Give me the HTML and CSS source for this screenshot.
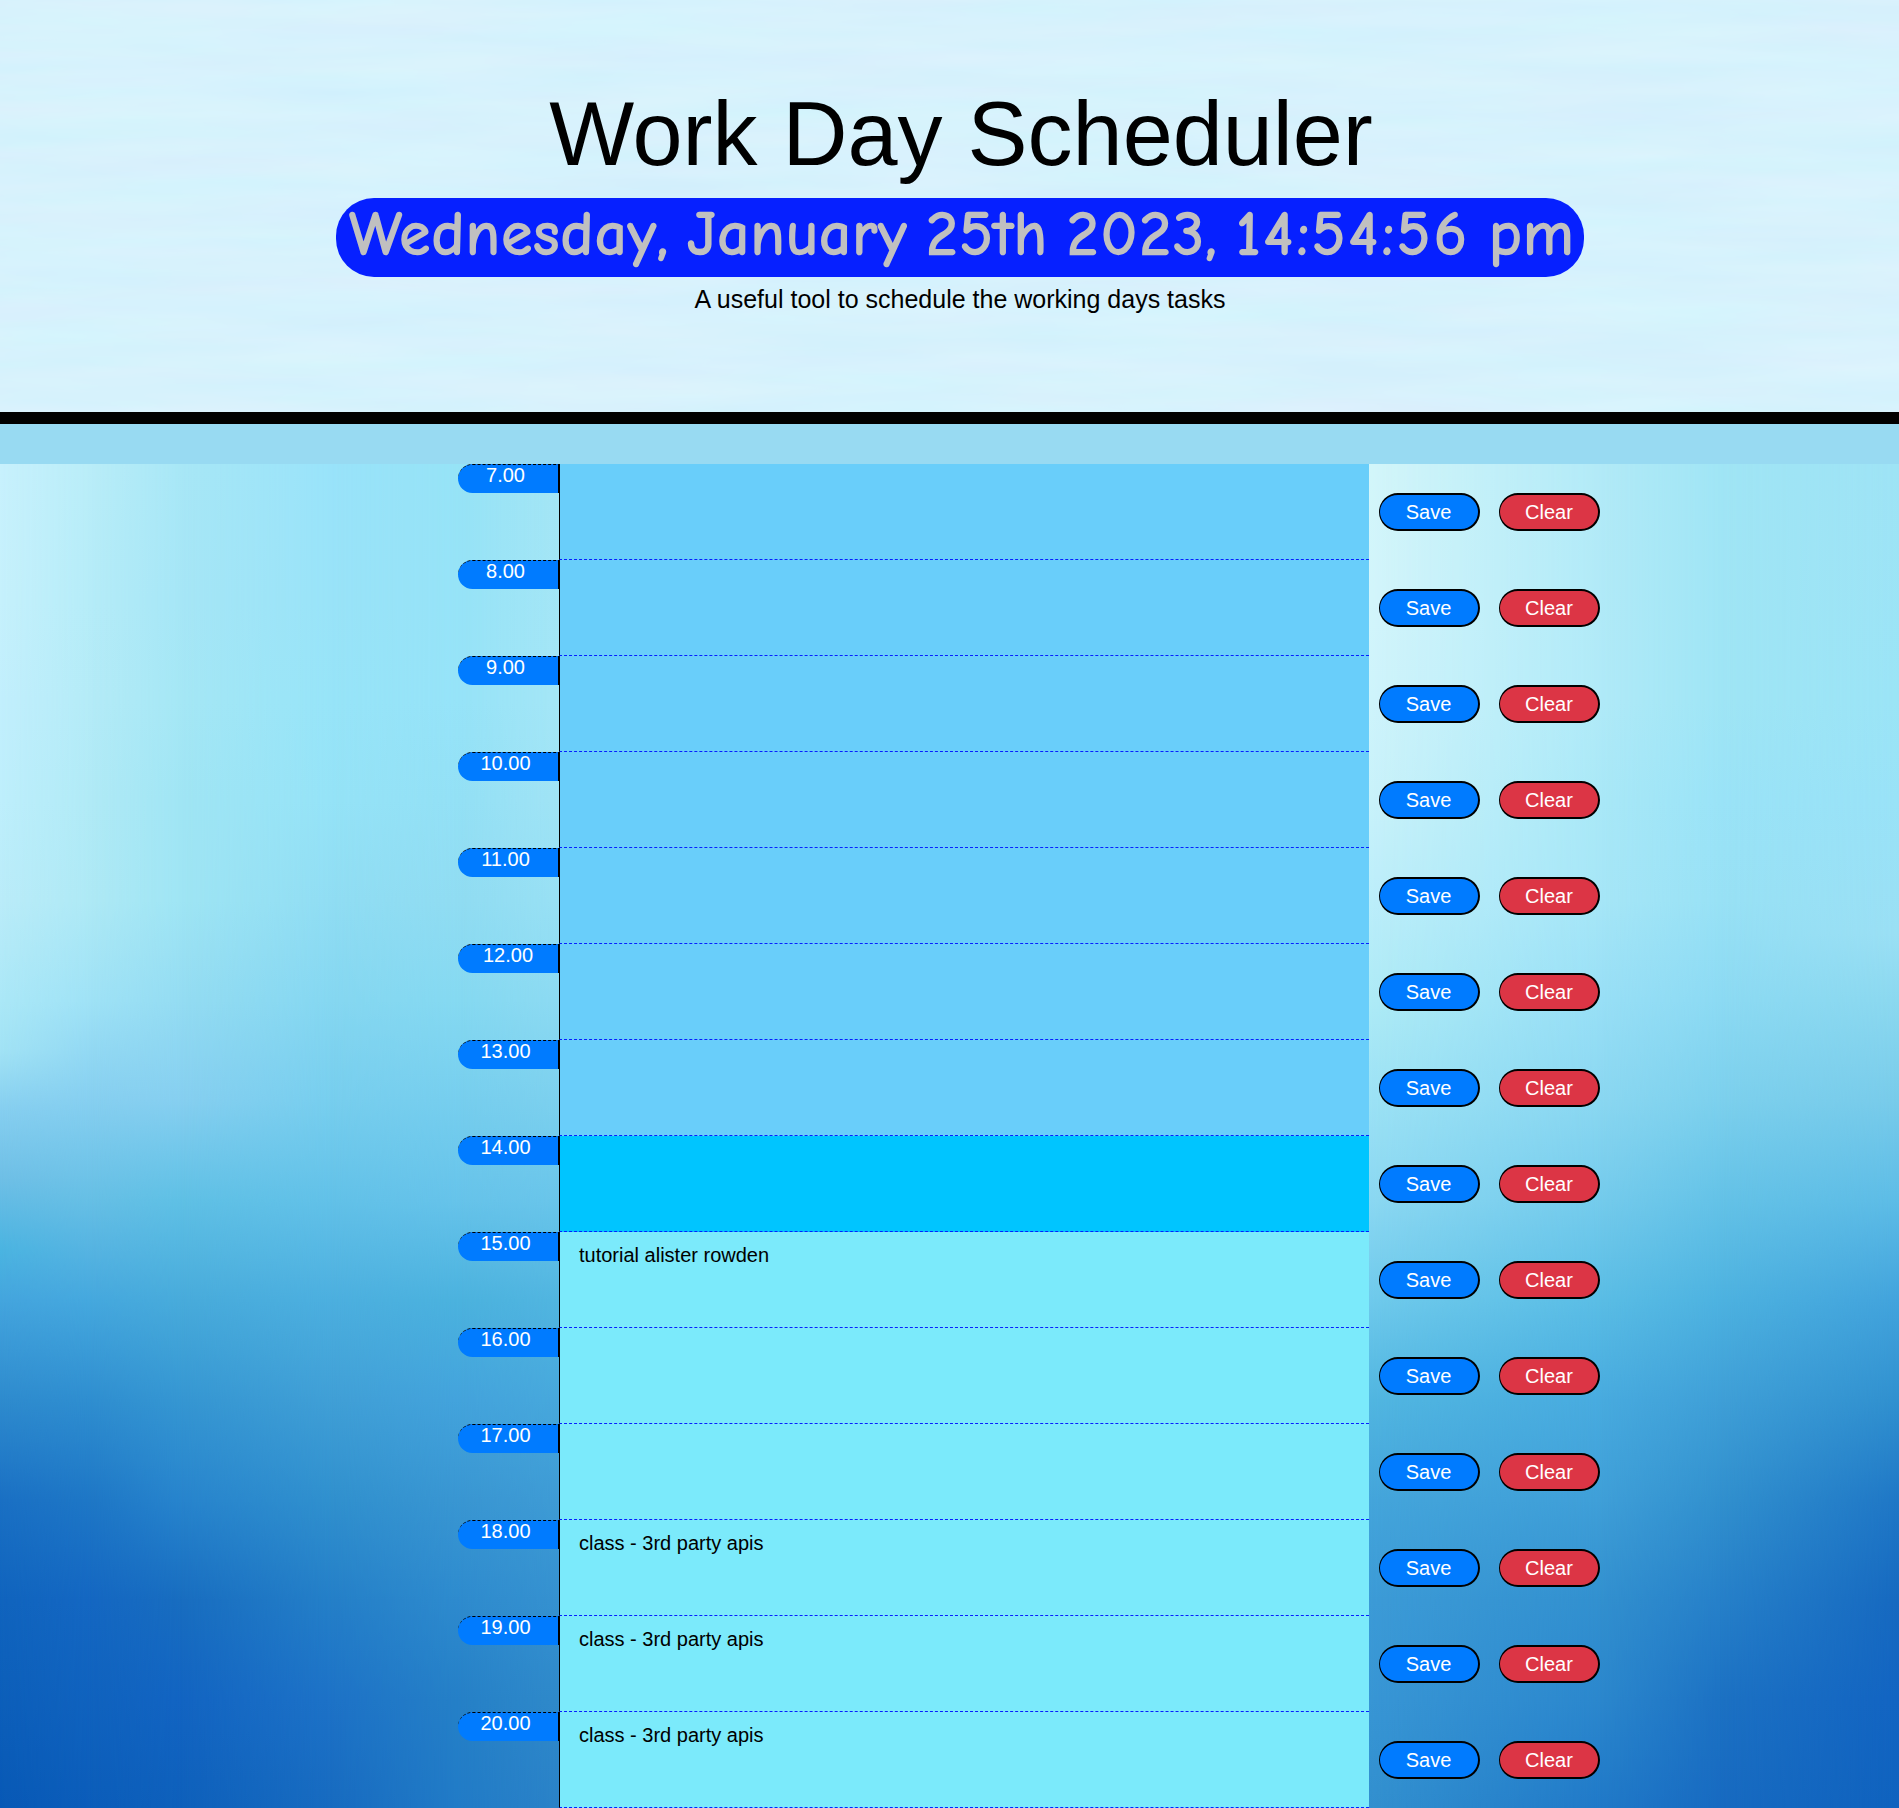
FILE: index.html
```html
<!DOCTYPE html>
<html lang="en">
<head>
<meta charset="utf-8">
<title>Work Day Scheduler</title>
<link rel="stylesheet" href="styles.css">
</head>
<body>
<header class="jumbotron">
  <svg class="ripples" width="100%" height="100%" aria-hidden="true">
    <filter id="ripple" x="0" y="0" width="100%" height="100%" color-interpolation-filters="sRGB">
      <feTurbulence type="fractalNoise" baseFrequency="0.004 0.04" numOctaves="3" seed="8"/>
      <feColorMatrix values="0.055 0 0 0 0.815  0 0.03 0 0 0.934  0 0 0.01 0 0.985  0 0 0 0 1"/>
    </filter>
    <rect width="100%" height="100%" filter="url(#ripple)"/>
  </svg>
  <h1 class="title">Work Day Scheduler</h1>
  <p class="today">Wednesday, January 25th 2023, <span class="clock">14:54:56</span> pm</p>
  <p class="lead">A useful tool to schedule the working days tasks</p>
</header>
<div class="band"></div>
<main class="planner">
  <div class="water" aria-hidden="true">
    <i class="c0"></i><i class="c1"></i><i class="c2"></i><i class="c3"></i><i class="c4"></i><i class="c5"></i><i class="c6"></i><i class="c7"></i><i class="c8"></i><i class="c9"></i>
  </div>
  <div class="container">
    <div class="row"><div class="hour">7.00</div><div class="task past"></div><button class="btn save">Save</button><button class="btn clear">Clear</button></div>
    <div class="row"><div class="hour">8.00</div><div class="task past"></div><button class="btn save">Save</button><button class="btn clear">Clear</button></div>
    <div class="row"><div class="hour">9.00</div><div class="task past"></div><button class="btn save">Save</button><button class="btn clear">Clear</button></div>
    <div class="row"><div class="hour">10.00</div><div class="task past"></div><button class="btn save">Save</button><button class="btn clear">Clear</button></div>
    <div class="row"><div class="hour">11.00</div><div class="task past"></div><button class="btn save">Save</button><button class="btn clear">Clear</button></div>
    <div class="row"><div class="hour noon">12.00</div><div class="task past"></div><button class="btn save">Save</button><button class="btn clear">Clear</button></div>
    <div class="row"><div class="hour">13.00</div><div class="task past"></div><button class="btn save">Save</button><button class="btn clear">Clear</button></div>
    <div class="row"><div class="hour">14.00</div><div class="task present"></div><button class="btn save">Save</button><button class="btn clear">Clear</button></div>
    <div class="row"><div class="hour">15.00</div><div class="task future">tutorial alister rowden</div><button class="btn save">Save</button><button class="btn clear">Clear</button></div>
    <div class="row"><div class="hour">16.00</div><div class="task future"></div><button class="btn save">Save</button><button class="btn clear">Clear</button></div>
    <div class="row"><div class="hour">17.00</div><div class="task future"></div><button class="btn save">Save</button><button class="btn clear">Clear</button></div>
    <div class="row"><div class="hour">18.00</div><div class="task future">class - 3rd party apis</div><button class="btn save">Save</button><button class="btn clear">Clear</button></div>
    <div class="row"><div class="hour">19.00</div><div class="task future">class - 3rd party apis</div><button class="btn save">Save</button><button class="btn clear">Clear</button></div>
    <div class="row"><div class="hour">20.00</div><div class="task future">class - 3rd party apis</div><button class="btn save">Save</button><button class="btn clear">Clear</button></div>
  </div>
</main>
</body>
</html>
```
FILE: styles.css
```css
* { box-sizing: border-box; }
body {
  margin: 0;
  font-family: "Liberation Sans", Arial, sans-serif;
  font-size: 20px;
  line-height: 30px;
  color: #000;
  background: #98daf2;
}
.jumbotron {
  position: relative;
  display: flex;
  flex-direction: column;
  align-items: center;
  height: 424px;
  padding: 80px 0 0 21px;
  border-bottom: 12px solid #000;
  background: #d7f2fd;
  overflow: hidden;
}
.ripples { position: absolute; inset: 0; }
.title, .today, .lead { position: relative; margin: 0; white-space: nowrap; }
.title { padding-left: 2px; font-size: 90px; font-weight: 400; line-height: 108px; }
.today {
  width: 1248px;
  height: 79px;
  margin-top: 10px;
  padding-left: 5px;
  border-radius: 38px;
  background: #0620ff;
  color: silver;
  font-family: "Comic Sans MS", "Comic Neue", Lato, sans-serif;
  font-size: 60px;
  line-height: 74px;
  letter-spacing: 2.3px;
  word-spacing: -4px;
  text-align: center;
  -webkit-text-stroke: 2.5px silver;
}
.clock { letter-spacing: 4.2px; }
.lead { margin-top: 4px; font-size: 25px; line-height: 36px; }
.band { height: 40px; background: #98daf2; }

.planner { position: relative; height: 1344px; overflow: hidden; }
.container { position: relative; padding-left: 458px; }
.row { display: flex; height: 96px; }
.hour {
  width: 101px;
  height: 29px;
  padding-right: 5px;
  border-top: 1px dashed #000;
  border-right: 1px solid #000;
  border-radius: 15px 0 0 15px;
  background: #007bff;
  color: #fff;
  line-height: 20px;
  text-align: center;
}
.noon { padding-right: 0; }
.task {
  width: 810px;
  padding: 8px 19px;
  border-left: 1px solid #000;
  border-bottom: 1px dashed #0620ff;
}
.past { background: #69cefa; }
.present { background: #00c5ff; }
.future { background: #7beafb; }
.btn {
  width: 101px;
  height: 38px;
  margin: 29px 9px 0 10px;
  padding: 0;
  border: 2px solid #000;
  border-left-width: 1px;
  border-radius: 19px;
  color: #fff;
  font: 20px/30px "Liberation Sans", Arial, sans-serif;
}
.save { padding-right: 1px; background: #007bff; }
.clear { background: #dc3545; }

/* Sea backdrop: vertical gradients cross-faded from left to right */
.water, .water i { position: absolute; inset: 0; }
.water i {
  -webkit-mask-image: linear-gradient(to right, transparent var(--from), #000 var(--to));
  mask-image: linear-gradient(to right, transparent var(--from), #000 var(--to));
}
.water .c0 { -webkit-mask: none; mask: none; background: linear-gradient(#c8f1fd 0, #c6f1fc 136px, #c2effd 236px, #beeffc 336px, #baecf9 436px, #abe8f7 536px, #a2e3f5 586px, #86cff0 645px, #6ebfe6 716px, #4bb4e1 786px, #44a5de 836px, #2e8bce 936px, #1a70c4 1036px, #1064be 1136px, #0859b6 1344px); }
.water .c1 { --from: 0px; --to: 90px; background: linear-gradient(#b9edf8 0, #b5ecf8 136px, #b4ebf7 236px, #b0eaf6 336px, #aee9f5 436px, #9fe2f6 536px, #86cff0 636px, #66bfe5 736px, #45a8de 836px, #2f8ed0 936px, #1e77c6 1036px, #1467c2 1136px, #0b5dba 1344px); }
.water .c2 { --from: 90px; --to: 180px; background: linear-gradient(#a8e7f6 0, #a6e6f6 136px, #a5e7f5 236px, #a0e5f4 336px, #9fe5f4 436px, #94dcf2 536px, #86cff0 636px, #5fc0e5 736px, #48abdb 836px, #3596d2 936px, #2784cd 1036px, #186dc0 1136px, #1264c2 1236px, #0e60bb 1344px); }
.water .c3 { --from: 180px; --to: 330px; background: linear-gradient(#99e3fa 0, #99e3f8 136px, #97e4f8 236px, #95e3f7 336px, #90ddf3 436px, #85d7f1 536px, #77ceee 636px, #62c1e8 736px, #4cafdf 836px, #409fd6 936px, #3090ce 1036px, #247fc8 1136px, #1d72c7 1236px, #176bc0 1344px); }
.water .c4 { --from: 330px; --to: 460px; background: linear-gradient(#96e3f6 0, #96e3f8 236px, #93e0f5 336px, #90dcf2 436px, #85d9f1 536px, #76ceee 636px, #66c3ea 736px, #4bb2de 836px, #43a3dc 936px, #3996d2 1036px, #2e8bce 1136px, #2580c7 1236px, #217bc7 1344px); }
.water .c5 { --from: 460px; --to: 559px; background: linear-gradient(#a3e5f5 0, #a4e6f6 236px, #a0e3f5 336px, #98e0f4 436px, #8cdaf2 536px, #7cd0ee 636px, #69c5ea 736px, #51b5e0 836px, #47a8dc 936px, #3e9bd5 1036px, #3591d0 1136px, #2f89ca 1236px, #2a82c8 1344px); }
.water .c6 { --from: 559px; --to: 1369px; background: linear-gradient(#d3f6fa 0, #d3f5fb 136px, #cff4fb 236px, #c9f2fa 336px, #bceefa 436px, #aeebf6 536px, #9ce2f5 636px, #8bd8f2 736px, #6fcaec 836px, #51b6e1 936px, #44a5db 1036px, #3c9bd7 1136px, #3896d5 1236px, #3290cf 1344px); }
.water .c7 { --from: 1369px; --to: 1600px; background: linear-gradient(#b2eaf7 0, #b0eaf8 236px, #a9e8f7 336px, #a6e6f7 436px, #98dff6 536px, #8ad7f1 636px, #74cbec 736px, #5abde5 836px, #48abdf 936px, #3f9fd8 1036px, #3290cf 1136px, #2b87cd 1236px, #2079c8 1344px); }
.water .c8 { --from: 1600px; --to: 1720px; background: linear-gradient(#a0e5f5 0, #9fe5f5 236px, #9ae3f7 336px, #98e1f5 436px, #8cdaf3 536px, #7cd0ed 636px, #64c2e7 736px, #4db2e0 836px, #3f9fd7 936px, #3190ce 1036px, #2680c9 1136px, #1c71c3 1236px, #176ac1 1344px); }
.water .c9 { --from: 1720px; --to: 1899px; background: linear-gradient(#9ee3f5 0, #9be4f6 236px, #99e2f7 336px, #9adff4 470px, #8bd8ef 536px, #78cbea 636px, #5dbce6 736px, #42a3dc 836px, #3090cf 936px, #1f77c6 1036px, #1669c0 1136px, #1264c2 1236px, #0f62be 1344px); }
```
